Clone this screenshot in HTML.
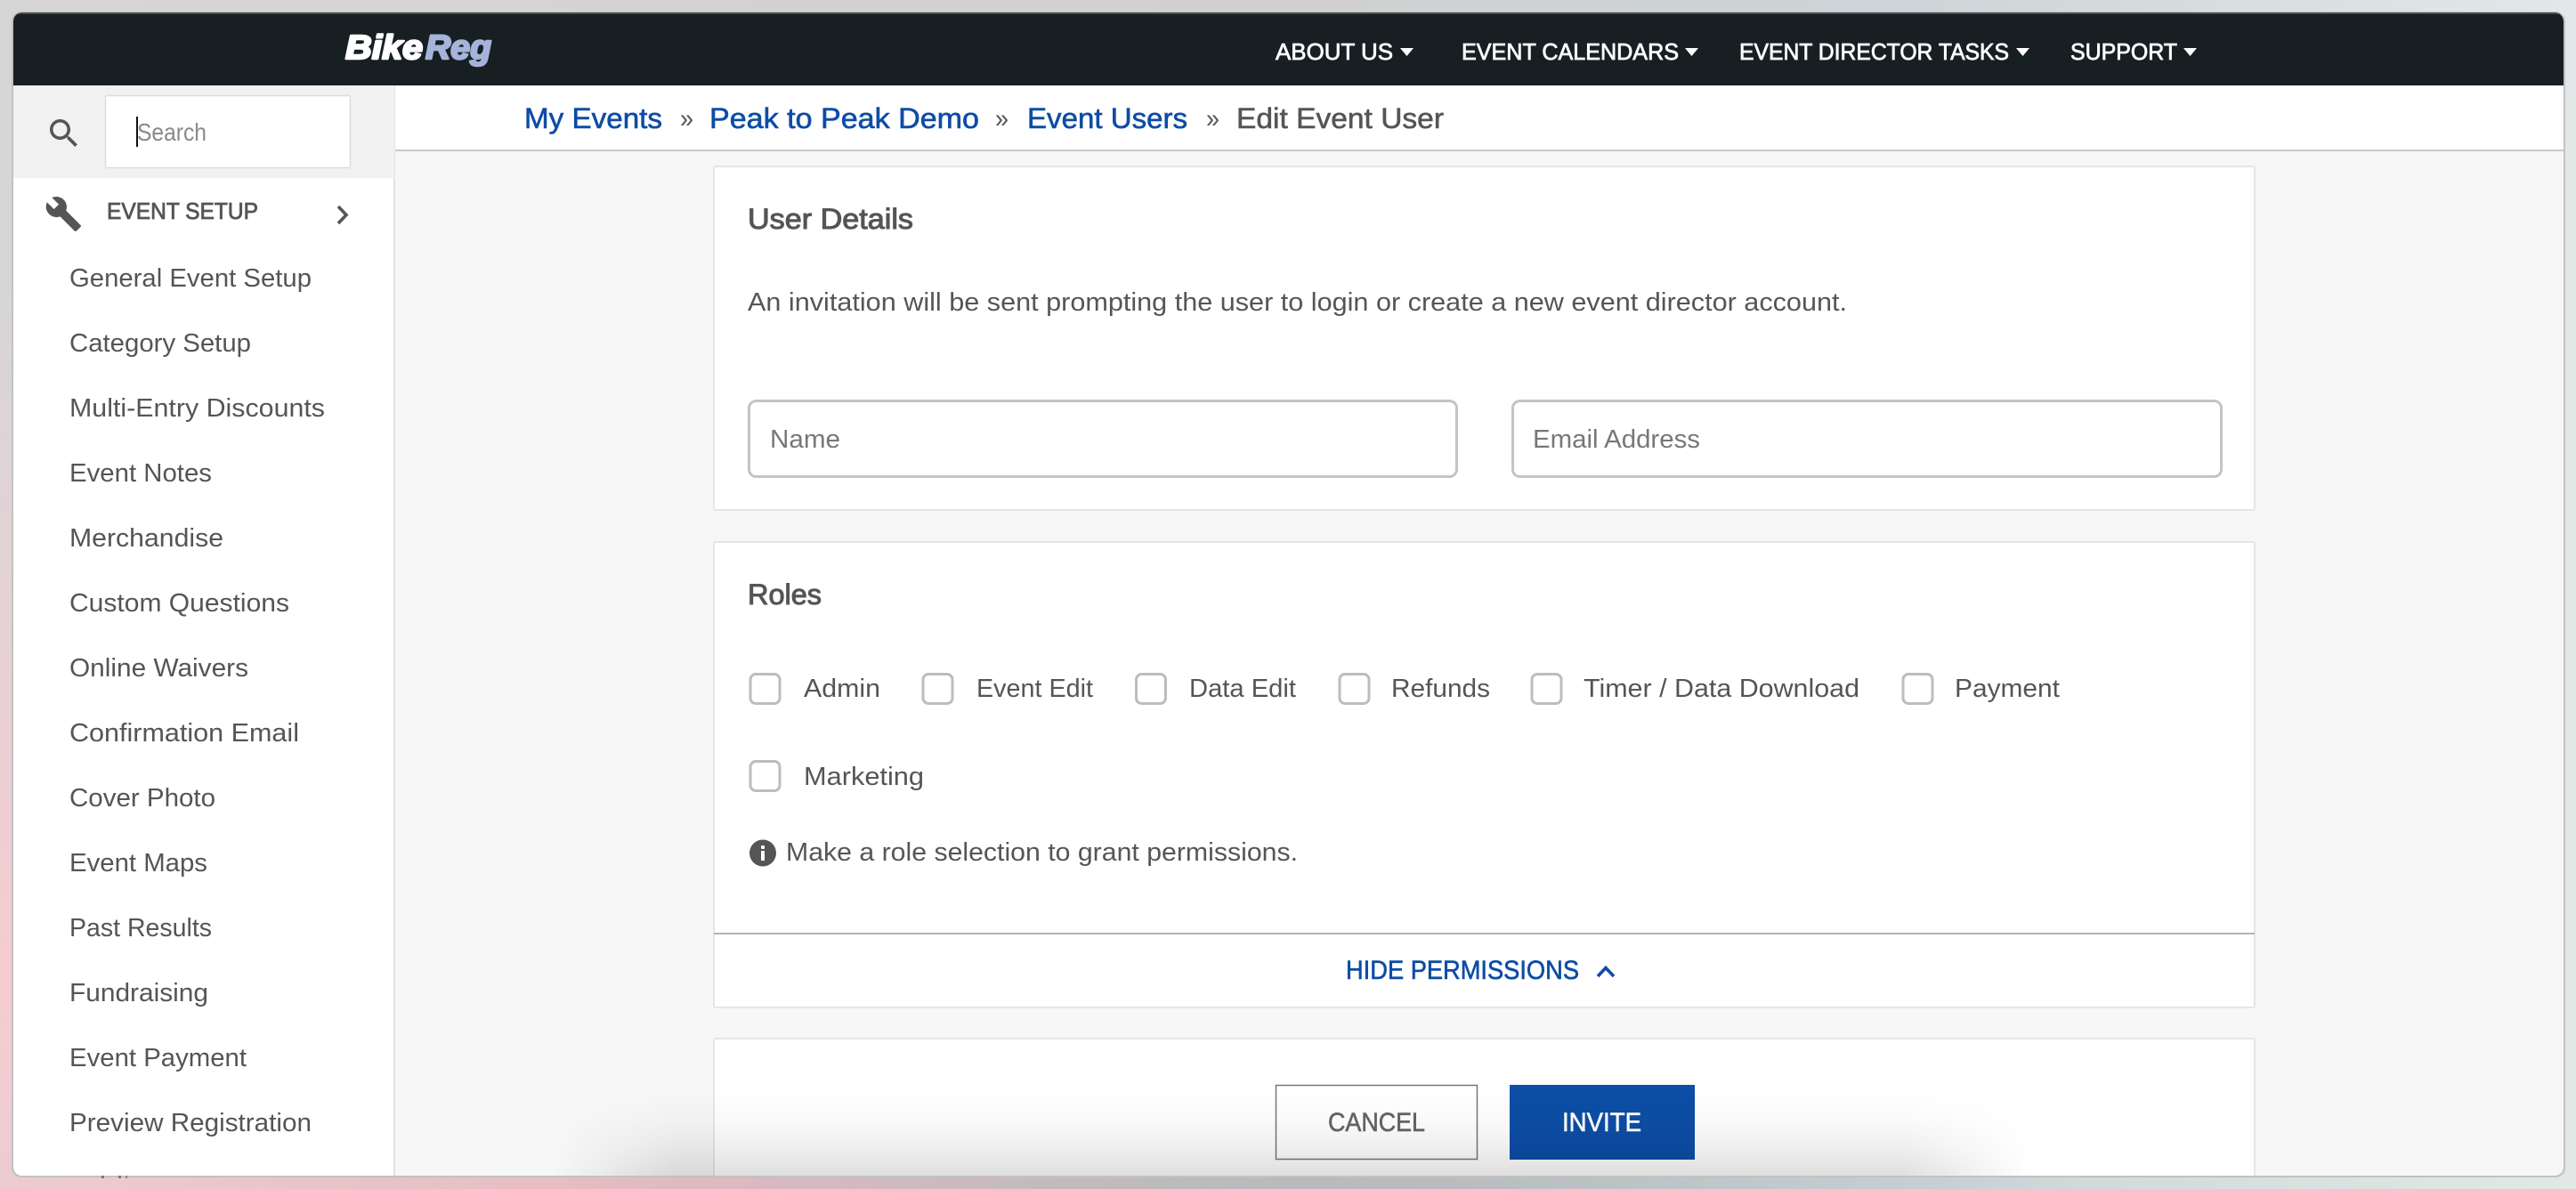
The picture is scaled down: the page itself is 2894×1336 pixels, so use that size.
<!DOCTYPE html>
<html lang="en"><head><meta charset="utf-8"><title>Edit Event User</title>
<style>
html,body{margin:0;padding:0;width:2894px;height:1336px;overflow:hidden}
body{background:
 radial-gradient(ellipse 900px 260px at 1480px 1400px,#aeb4b8 0%,rgba(174,180,184,0) 100%),
 radial-gradient(ellipse 900px 500px at 800px 1400px,#eeb6bf 0%,rgba(238,182,191,0) 100%),
 radial-gradient(ellipse 700px 800px at 0px 1100px,#f5ccd2 0%,rgba(245,204,210,0) 100%),
 linear-gradient(90deg,#d6d6d6 0%,#d0d0d0 50%,#cdd5d8 75%,#e2e8e7 100%)}
svg{position:absolute;left:0;top:0;display:block}
text{font-family:"Liberation Sans",Arial,sans-serif;font-size:29px;fill:#555}
.n{font-size:25.5px;fill:#fff;stroke:#fff;stroke-width:.75px}
.b{font-size:32px;fill:#0d4ca6;stroke:#0d4ca6;stroke-width:.6px}
.s{font-size:32px;stroke:#555;stroke-width:.6px}
.t{font-size:32px;stroke:#555;stroke-width:1px}
.ph{fill:#777}
.cb{fill:#fff;stroke:#bdbdbd;stroke-width:3}
</style></head>
<body>
<svg width="2894" height="1336" viewBox="0 0 2894 1336" xmlns="http://www.w3.org/2000/svg">
<defs>
<clipPath id="w"><rect x="15" y="14" width="2865" height="1307" rx="10"/></clipPath>
<linearGradient id="sv" x1="0" y1="0" x2="0" y2="1">
<stop offset="0" stop-color="#000" stop-opacity="0"/>
<stop offset=".35" stop-color="#000" stop-opacity=".02"/>
<stop offset=".65" stop-color="#000" stop-opacity=".06"/>
<stop offset="1" stop-color="#000" stop-opacity=".125"/>
</linearGradient>
<linearGradient id="sh" gradientUnits="userSpaceOnUse" x1="620" y1="0" x2="2280" y2="0">
<stop offset="0" stop-color="#fff" stop-opacity="0"/>
<stop offset=".085" stop-color="#fff" stop-opacity="1"/>
<stop offset=".915" stop-color="#fff" stop-opacity="1"/>
<stop offset="1" stop-color="#fff" stop-opacity="0"/>
</linearGradient>
<mask id="sm" maskUnits="userSpaceOnUse" x="620" y="1225" width="1660" height="96"><rect x="620" y="1225" width="1660" height="96" fill="url(#sh)"/></mask>
</defs>

<!-- window edges -->
<rect x="13" y="13" width="2869" height="1310" rx="11" fill="#c2c2c2"/>
<rect x="114" y="1321" width="3" height="3" fill="#777"/>
<rect x="133" y="1321" width="3" height="3" fill="#777"/>
<rect x="141" y="1321" width="2" height="3" fill="#888"/>

<g clip-path="url(#w)">
<rect x="15" y="14" width="2865" height="1307" fill="#f7f7f7"/>

<!-- header -->
<rect x="15" y="14" width="2865" height="82" fill="#171f22"/>
<rect x="15" y="14" width="2865" height="2" fill="#454b4e"/>
<text x="388" y="66" textLength="87" lengthAdjust="spacingAndGlyphs" style="font-size:38px;font-weight:700;font-style:italic;fill:#fff;stroke:#fff;stroke-width:2.4px;stroke-linejoin:round">Bike</text>
<text x="478" y="66" textLength="74" lengthAdjust="spacingAndGlyphs" style="font-size:38px;font-weight:700;font-style:italic;fill:#a6b3db;stroke:#a6b3db;stroke-width:2.4px;stroke-linejoin:round">Reg</text>

<text class="n" x="1433" y="67" textLength="132" lengthAdjust="spacingAndGlyphs">ABOUT US</text>
<polygon points="1573,54 1588,54 1580.5,63" fill="#fff"/>
<text class="n" x="1642" y="67" textLength="244" lengthAdjust="spacingAndGlyphs">EVENT CALENDARS</text>
<polygon points="1893,54 1908,54 1900.5,63" fill="#fff"/>
<text class="n" x="1954" y="67" textLength="303" lengthAdjust="spacingAndGlyphs">EVENT DIRECTOR TASKS</text>
<polygon points="2265,54 2280,54 2272.5,63" fill="#fff"/>
<text class="n" x="2326" y="67" textLength="120" lengthAdjust="spacingAndGlyphs">SUPPORT</text>
<polygon points="2453,54 2468,54 2460.5,63" fill="#fff"/>

<!-- breadcrumb -->
<rect x="443" y="96" width="2437" height="73" fill="#fff"/>
<rect x="443" y="168" width="2437" height="2" fill="#cacaca"/>
<text class="b" x="589" y="144" textLength="155" lengthAdjust="spacingAndGlyphs">My Events</text>
<text x="764" y="143" textLength="15" lengthAdjust="spacingAndGlyphs" style="font-size:30px">»</text>
<text class="b" x="797" y="144" textLength="303" lengthAdjust="spacingAndGlyphs">Peak to Peak Demo</text>
<text x="1118" y="143" textLength="15" lengthAdjust="spacingAndGlyphs" style="font-size:30px">»</text>
<text class="b" x="1154" y="144" textLength="180" lengthAdjust="spacingAndGlyphs">Event Users</text>
<text x="1355" y="143" textLength="15" lengthAdjust="spacingAndGlyphs" style="font-size:30px">»</text>
<text class="s" x="1389" y="144" textLength="233" lengthAdjust="spacingAndGlyphs">Edit Event User</text>

<!-- sidebar -->
<rect x="15" y="96" width="428" height="1225" fill="#fff"/>
<rect x="442" y="96" width="2" height="1225" fill="#e2e2e2"/>
<rect x="15" y="96" width="428" height="104" fill="#f1f1f1"/>
<rect x="118.500" y="107.500" width="275" height="81" rx="2" fill="#fff" stroke="#dcdcdc" stroke-width="1.500"/>
<path transform="translate(50.7 128.7) scale(1.77)" fill="#555" d="M15.5 14h-.79l-.28-.27C15.41 12.59 16 11.11 16 9.500 16 5.910 13.090 3 9.500 3S3 5.910 3 9.500 5.910 16 9.500 16c1.610 0 3.090-.59 4.230-1.570l.27.28v.79l5 4.990L20.490 19l-4.990-5zm-6 0C7.010 14 5 11.990 5 9.500S7.010 5 9.500 5 14 7.010 14 9.500 11.990 14 9.500 14z"/>
<rect x="153" y="131" width="2" height="34" fill="#111"/>
<text class="ph" x="154" y="158" textLength="78" lengthAdjust="spacingAndGlyphs" style="font-size:28px;fill:#8a8a8a">Search</text>

<path transform="translate(50 219) scale(1.78)" fill="#555" d="M22.700 19l-9.100-9.100c.9-2.300.4-5-1.500-6.900-2-2-5-2.400-7.400-1.300L9 6 6 9 1.600 4.700C.4 7.100.9 10.100 2.900 12.100c1.900 1.900 4.600 2.400 6.900 1.500l9.100 9.100c.4.4 1 .4 1.400 0l2.300-2.300c.5-.4.5-1.100.1-1.400z"/>
<text x="120" y="246" textLength="170" lengthAdjust="spacingAndGlyphs" style="font-size:26px;stroke:#555;stroke-width:.8px">EVENT SETUP</text>
<path d="M380 232l9 9.500-9 9.500" fill="none" stroke="#555" stroke-width="3.600"/>

<text x="78" y="322" textLength="272" lengthAdjust="spacingAndGlyphs">General Event Setup</text>
<text x="78" y="395" textLength="204" lengthAdjust="spacingAndGlyphs">Category Setup</text>
<text x="78" y="468" textLength="287" lengthAdjust="spacingAndGlyphs">Multi-Entry Discounts</text>
<text x="78" y="541" textLength="160" lengthAdjust="spacingAndGlyphs">Event Notes</text>
<text x="78" y="614" textLength="173" lengthAdjust="spacingAndGlyphs">Merchandise</text>
<text x="78" y="687" textLength="247" lengthAdjust="spacingAndGlyphs">Custom Questions</text>
<text x="78" y="760" textLength="201" lengthAdjust="spacingAndGlyphs">Online Waivers</text>
<text x="78" y="833" textLength="258" lengthAdjust="spacingAndGlyphs">Confirmation Email</text>
<text x="78" y="906" textLength="164" lengthAdjust="spacingAndGlyphs">Cover Photo</text>
<text x="78" y="979" textLength="155" lengthAdjust="spacingAndGlyphs">Event Maps</text>
<text x="78" y="1052" textLength="160" lengthAdjust="spacingAndGlyphs">Past Results</text>
<text x="78" y="1125" textLength="156" lengthAdjust="spacingAndGlyphs">Fundraising</text>
<text x="78" y="1198" textLength="199" lengthAdjust="spacingAndGlyphs">Event Payment</text>
<text x="78" y="1271" textLength="272" lengthAdjust="spacingAndGlyphs">Preview Registration</text>

<!-- user details card -->
<rect x="802" y="187" width="1731" height="386" rx="2" fill="#fff" stroke="#e6e6e6" stroke-width="2"/>
<text class="t" x="840" y="257" textLength="186" lengthAdjust="spacingAndGlyphs">User Details</text>
<text x="840" y="349" textLength="1235" lengthAdjust="spacingAndGlyphs">An invitation will be sent prompting the user to login or create a new event director account.</text>
<rect x="841.500" y="450.500" width="795" height="85" rx="8" fill="#fff" stroke="#c4c4c4" stroke-width="3"/>
<text class="ph" x="865" y="503" textLength="79" lengthAdjust="spacingAndGlyphs">Name</text>
<rect x="1699.500" y="450.500" width="796" height="85" rx="8" fill="#fff" stroke="#c4c4c4" stroke-width="3"/>
<text class="ph" x="1722" y="503" textLength="188" lengthAdjust="spacingAndGlyphs">Email Address</text>

<!-- roles card -->
<rect x="802" y="609" width="1731" height="523" rx="2" fill="#fff" stroke="#e6e6e6" stroke-width="2"/>
<text class="t" x="840" y="679" textLength="83" lengthAdjust="spacingAndGlyphs">Roles</text>

<rect class="cb" x="843" y="757.500" width="33" height="33" rx="6"/>
<text x="903" y="783" textLength="86" lengthAdjust="spacingAndGlyphs">Admin</text>
<rect class="cb" x="1037" y="757.500" width="33" height="33" rx="6"/>
<text x="1097" y="783" textLength="131" lengthAdjust="spacingAndGlyphs">Event Edit</text>
<rect class="cb" x="1276.500" y="757.500" width="33" height="33" rx="6"/>
<text x="1336" y="783" textLength="120" lengthAdjust="spacingAndGlyphs">Data Edit</text>
<rect class="cb" x="1505" y="757.500" width="33" height="33" rx="6"/>
<text x="1563" y="783" textLength="111" lengthAdjust="spacingAndGlyphs">Refunds</text>
<rect class="cb" x="1721" y="757.500" width="33" height="33" rx="6"/>
<text x="1779" y="783" textLength="310" lengthAdjust="spacingAndGlyphs">Timer / Data Download</text>
<rect class="cb" x="2138" y="757.500" width="33" height="33" rx="6"/>
<text x="2196" y="783" textLength="118" lengthAdjust="spacingAndGlyphs">Payment</text>
<rect class="cb" x="843" y="855.500" width="33" height="33" rx="6"/>
<text x="903" y="882" textLength="135" lengthAdjust="spacingAndGlyphs">Marketing</text>

<circle cx="857" cy="958.500" r="15" fill="#555"/>
<rect x="855" y="950" width="4" height="4" rx="1" fill="#fff"/>
<rect x="855" y="956" width="4" height="11" fill="#fff"/>
<text x="883" y="967" textLength="575" lengthAdjust="spacingAndGlyphs">Make a role selection to grant permissions.</text>

<rect x="802" y="1048" width="1731" height="2" fill="#b4b4b4"/>
<text x="1512" y="1100" textLength="262" lengthAdjust="spacingAndGlyphs" style="font-size:29.5px;fill:#0d4ca6;stroke:#0d4ca6;stroke-width:.6px">HIDE PERMISSIONS</text>
<path d="M1795 1097l9-9.500 9 9.500" fill="none" stroke="#0d4ca6" stroke-width="3.600"/>

<!-- actions card -->
<rect x="802" y="1167" width="1731" height="164" rx="2" fill="#fff" stroke="#e6e6e6" stroke-width="2"/>
<rect x="1433.500" y="1219.500" width="226" height="83" fill="#fff" stroke="#777" stroke-width="1.500"/>
<text x="1492" y="1271" textLength="109" lengthAdjust="spacingAndGlyphs" style="font-size:29.5px;fill:#666;stroke:#666;stroke-width:.6px">CANCEL</text>
<rect x="1696" y="1219" width="208" height="84" fill="#0d4ea6"/>
<text x="1755" y="1271" textLength="89" lengthAdjust="spacingAndGlyphs" style="font-size:29.5px;fill:#fff;stroke:#fff;stroke-width:.6px">INVITE</text>

<!-- soft shadow at the bottom -->
<rect x="620" y="1225" width="1660" height="96" fill="url(#sv)" mask="url(#sm)"/>
</g>
</svg>
</body></html>
